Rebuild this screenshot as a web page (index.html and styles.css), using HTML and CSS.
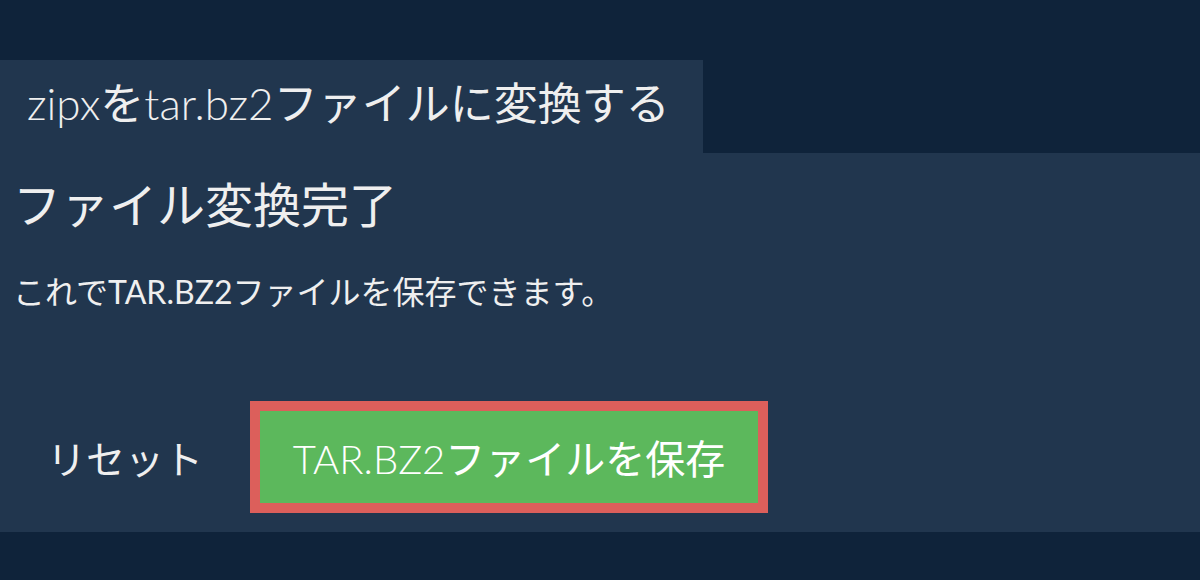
FILE: index.html
```html
<!DOCTYPE html>
<html lang="ja">
<head>
    <meta charset="UTF-8">
    <meta name="viewport" content="width=device-width, initial-scale=1.0">
    <title>zipxをtar.bz2ファイルに変換する</title>
    <link rel="stylesheet" href="styles.css">
</head>
<body>
    <main class="converter">
        <div class="tab">
            <h1 class="tab-title"><span class="latin">zipx</span>を<span class="latin">tar.bz2</span>ファイルに変換する</h1>
        </div>

        <section class="panel">
            <h2 class="panel-title">ファイル変換完了</h2>
            <p class="panel-text">これでTAR.BZ2ファイルを保存できます。</p>

            <div class="actions">
                <button type="button" class="reset">リセット</button>
                <button type="button" class="save"><span class="latin">TAR.BZ2</span>ファイルを保存</button>
            </div>
        </section>
    </main>
</body>
</html>
```

FILE: styles.css
```css
body {
    margin: 0;
    background-color: #0f233a;
    color: #efefef;
    font-family: Lato, "Noto Sans CJK JP", sans-serif;
}
.latin {
    font-weight: 300;
}
.converter {
    padding: 60px 0 48px;
}
.tab {
    width: 703px;
    height: 93px;
    display: flex;
    align-items: center;
    background-color: #21364e;
}
.tab-title {
    margin: 0 0 12px 27px;
    font-size: 44px;
    font-weight: normal;
    white-space: nowrap;
}
.panel {
    height: 379px;
    padding: 0 15px 0 13px;
    box-sizing: border-box;
    background-color: #21364e;
    display: flex;
    flex-direction: column;
}
.panel-title {
    margin: 14px 0 0;
    font-size: 48px;
    font-weight: normal;
}
.panel-text {
    margin: 30px 0 0;
    font-size: 32px;
}
.actions {
    margin-top: 88px;
    display: flex;
    align-items: center;
    gap: 47px;
}
.reset {
    margin-left: 34px;
    padding: 0;
    border: none;
    background: none;
    color: #efefef;
    font-family: inherit;
    font-size: 39px;
    cursor: pointer;
}
.save {
    width: 518px;
    height: 112px;
    border: 10px solid #dc5f5b;
    background-color: #5cb85c;
    color: #fff;
    font-family: inherit;
    font-size: 40px;
    cursor: pointer;
}
```
